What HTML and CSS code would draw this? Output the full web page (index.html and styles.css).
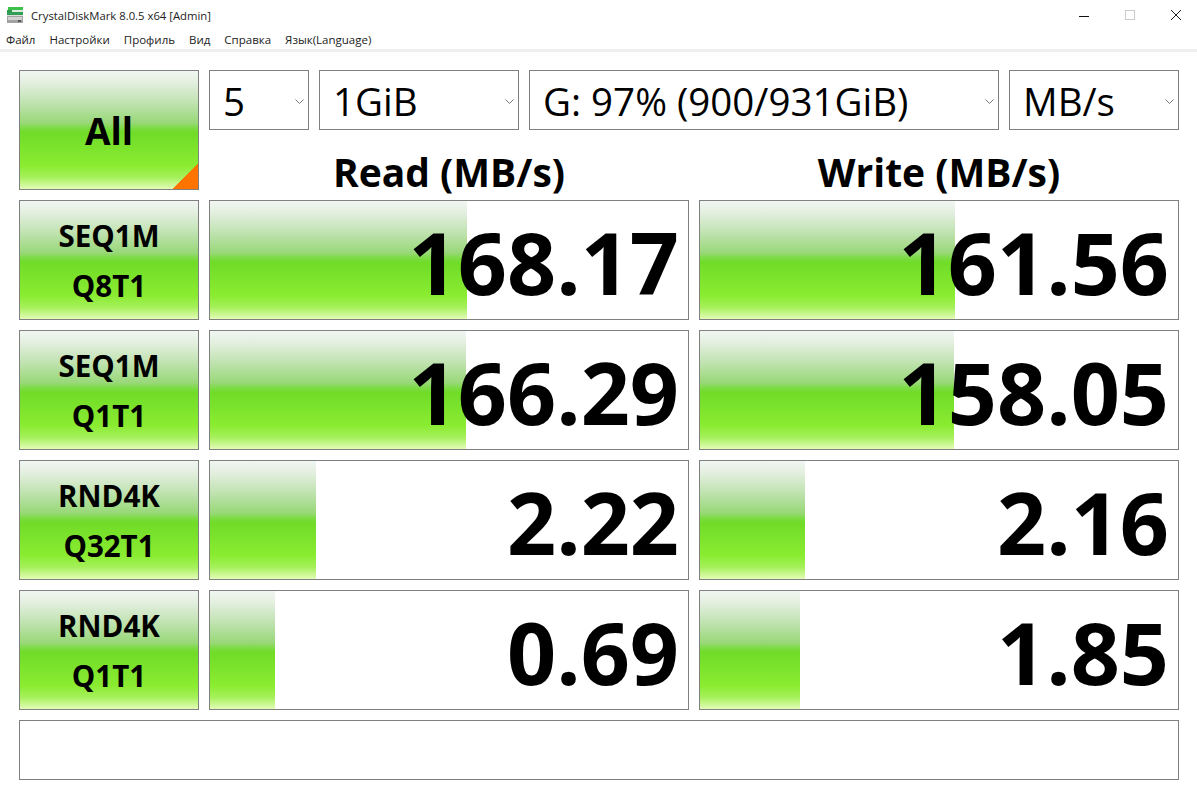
FILE: index.html
```html
<!DOCTYPE html>
<html lang="ru">
<head>
  <meta charset="UTF-8">
  <title>CrystalDiskMark 8.0.5 x64 [Admin]</title>
  <link rel="stylesheet" href="styles.css">
</head>
<body>
  <div class="titlebar">
    <svg class="app-icon" width="18" height="18" viewBox="0 0 18 18">
      <rect x="2" y="1" width="15" height="3" fill="#3cc04a"/>
      <rect x="1" y="4" width="5" height="2" fill="#2a9a48"/>
      <rect x="6" y="4" width="11" height="2" fill="#dfeadf"/>
      <rect x="1" y="6" width="16" height="3" fill="#2f9f55"/>
      <rect x="1" y="9" width="16" height="1" fill="#dddddd"/>
      <rect x="1" y="10" width="16" height="7" fill="#a2a2a2"/>
      <rect x="2" y="11" width="14" height="3" fill="#d2d2d2"/>
      <rect x="12" y="14" width="3" height="2" fill="#555"/>
    </svg>
    <span class="title">CrystalDiskMark 8.0.5 x64 [Admin]</span>
    <div class="window-btns">
      <svg width="12" height="12" viewBox="0 0 12 12"><path d="M1 7.5h10" stroke="#111" fill="none"/></svg>
      <svg width="12" height="12" viewBox="0 0 12 12"><rect x="1.5" y="1.5" width="9" height="9" stroke="#ccc" fill="none"/></svg>
      <svg width="12" height="12" viewBox="0 0 12 12"><path d="M1 1l10 10M11 1L1 11" stroke="#222" fill="none"/></svg>
    </div>
  </div>
  <div class="menubar">
    <span>Файл</span>
    <span>Настройки</span>
    <span>Профиль</span>
    <span>Вид</span>
    <span>Справка</span>
    <span>Язык(Language)</span>
  </div>

  <div class="main">
    <div class="top">
      <div class="btn btn-all">All<i class="corner"></i></div>
      <div class="controls">
        <div class="selects">
          <div class="select s-count">5<svg class="chev" width="9" height="5" viewBox="0 0 9 5"><path d="M.5.5l4 4 4-4" stroke="#777" fill="none"/></svg></div>
          <div class="select s-size">1GiB<svg class="chev" width="9" height="5" viewBox="0 0 9 5"><path d="M.5.5l4 4 4-4" stroke="#777" fill="none"/></svg></div>
          <div class="select s-drive">G: 97% (900/931GiB)<svg class="chev" width="9" height="5" viewBox="0 0 9 5"><path d="M.5.5l4 4 4-4" stroke="#777" fill="none"/></svg></div>
          <div class="select s-unit">MB/s<svg class="chev" width="9" height="5" viewBox="0 0 9 5"><path d="M.5.5l4 4 4-4" stroke="#777" fill="none"/></svg></div>
        </div>
        <div class="heads">
          <div class="head">Read (MB/s)</div>
          <div class="head">Write (MB/s)</div>
        </div>
      </div>
    </div>

    <div class="row">
      <div class="btn btn-test">SEQ1M<br>Q8T1</div>
      <div class="cell"><div class="bar" style="width:257px"></div><span class="num">168.17</span></div>
      <div class="cell"><div class="bar" style="width:255px"></div><span class="num">161.56</span></div>
    </div>
    <div class="row">
      <div class="btn btn-test">SEQ1M<br>Q1T1</div>
      <div class="cell"><div class="bar" style="width:256px"></div><span class="num">166.29</span></div>
      <div class="cell"><div class="bar" style="width:254px"></div><span class="num">158.05</span></div>
    </div>
    <div class="row">
      <div class="btn btn-test">RND4K<br>Q32T1</div>
      <div class="cell"><div class="bar" style="width:106px"></div><span class="num">2.22</span></div>
      <div class="cell"><div class="bar" style="width:105px"></div><span class="num">2.16</span></div>
    </div>
    <div class="row">
      <div class="btn btn-test">RND4K<br>Q1T1</div>
      <div class="cell"><div class="bar" style="width:65px"></div><span class="num">0.69</span></div>
      <div class="cell"><div class="bar" style="width:100px"></div><span class="num">1.85</span></div>
    </div>

    <div class="comment"></div>
  </div>
</body>
</html>
```

FILE: styles.css
```css
* {
  box-sizing: border-box;
}
html, body {
  height: 100%;
}
body {
  margin: 0;
  background: #fff;
  color: #000;
  font-family: "Open Sans", "Noto Sans", sans-serif;
  overflow: hidden;
}
.titlebar {
  display: flex;
  align-items: center;
  height: 30px;
  padding-left: 6px;
}
.app-icon {
  margin-right: 7px;
}
.title {
  font-size: 11.3px;
  color: #222;
}
.window-btns {
  margin-left: auto;
  display: flex;
  gap: 34px;
  padding-right: 15px;
}
.menubar {
  display: flex;
  gap: 14px;
  height: 19px;
  padding-left: 6px;
  font-size: 11.5px;
  line-height: 20px;
  color: #222;
}
.main {
  border-top: 3px solid #efefef;
  padding: 18px 18px 0 19px;
  display: flex;
  flex-direction: column;
  gap: 10px;
}
.top {
  display: flex;
  gap: 10px;
}
.btn {
  position: relative;
  flex: 0 0 180px;
  height: 120px;
  border: 1px solid #808080;
  display: flex;
  align-items: center;
  justify-content: center;
  text-align: center;
  font-weight: 700;
  background: linear-gradient(#f0f6f2 0%, #e3efdf 10%, #c4e4b6 25%, #98d878 44%, #7edb48 48%, #70dc28 52%, #8aec30 80%, #a5f05a 90%, #e4fcb8 100%);
}
.btn-all {
  font-size: 37px;
}
.btn-test {
  font-size: 29.5px;
  line-height: 50px;
  padding-top: 2px;
}
.corner {
  position: absolute;
  right: 0;
  bottom: 0;
  width: 25px;
  height: 25px;
  background: linear-gradient(135deg, transparent 50%, #ff7400 50%);
}
.controls {
  flex: 1;
}
.selects {
  display: flex;
  gap: 10px;
  height: 60px;
}
.select {
  display: flex;
  align-items: center;
  position: relative;
  height: 60px;
  border: 1px solid #808080;
  padding: 2px 0 0 13px;
  font-size: 38.5px;
}
.s-count { width: 100px; }
.s-size { width: 200px; }
.s-drive { width: 470px; }
.s-unit { width: 170px; }
.chev {
  position: absolute;
  right: 4px;
  top: 28px;
}
.heads {
  display: flex;
  gap: 10px;
  height: 60px;
}
.head {
  width: 480px;
  text-align: center;
  font-size: 39px;
  font-weight: 700;
  line-height: 84px;
}
.row {
  display: flex;
  gap: 10px;
}
.cell {
  position: relative;
  flex: 0 0 480px;
  height: 120px;
  border: 1px solid #808080;
  display: flex;
  align-items: center;
  justify-content: flex-end;
  padding: 4px 9px 0 0;
}
.bar {
  position: absolute;
  left: 0;
  top: 0;
  bottom: 0;
  background: linear-gradient(#f0f6f2 0%, #e3efdf 10%, #c4e4b6 25%, #98d878 44%, #7edb48 48%, #70dc28 52%, #8aec30 80%, #a5f05a 90%, #e4fcb8 100%);
}
.num {
  position: relative;
  font-size: 86px;
  font-weight: 700;
  line-height: 1;
}
.comment {
  height: 60px;
  border: 1px solid #808080;
}
```
